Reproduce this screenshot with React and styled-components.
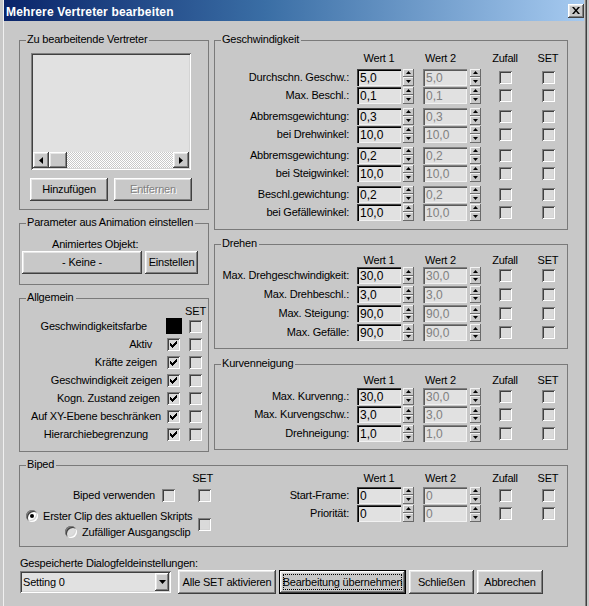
import React from "react";
import styled, { createGlobalStyle, css } from "styled-components";

const BG = "#c8c8c8";
const FIELD = "#e1e1e1";

const GlobalStyle = createGlobalStyle`
  * { box-sizing: border-box; }
  html, body { margin: 0; padding: 0; background: ${BG}; }
  body {
    font-family: "Liberation Sans", Arial, sans-serif;
    font-size: 11px;
    line-height: 13px;
    letter-spacing: -0.2px;
    color: #000;
    overflow: hidden;
  }
`;

const raised = css`
  background: ${BG};
  box-shadow: inset -1px -1px #404040, inset 1px 1px #ffffff,
    inset -2px -2px #808080, inset 2px 2px #e6e6e6;
`;

const raisedThin = css`
  background: ${BG};
  box-shadow: inset -1px -1px #6a6a6a, inset 1px 1px #f4f4f4;
`;

const sunken = css`
  box-shadow: inset 1px 1px #808080, inset -1px -1px #ffffff,
    inset 2px 2px #404040, inset -2px -2px #d4d4d4;
`;

/* ---------- window chrome ---------- */

const Window = styled.div`
  margin-left: 3px;
  width: 584px;
  height: 606px;
  padding: 0 3px 0 1px;
  background: ${BG};
  box-shadow: inset 1px 0 #f0f0f0, inset -1px 0 #404040, inset -2px 0 #808080;
`;

const TitleBar = styled.div`
  height: 21px;
  display: flex;
  align-items: center;
  justify-content: space-between;
  padding-left: 2px;
  background: linear-gradient(90deg, #0a246a 0%, #3a6ea5 45%, #a6caf0 100%);
`;

const Title = styled.span`
  color: #fff;
  font-weight: bold;
  font-size: 12px;
  line-height: 14px;
  letter-spacing: 0.15px;
  padding-top: 2px;
`;

const CloseBtn = styled.div`
  ${raised};
  width: 16px;
  height: 14px;
  display: flex;
  align-items: center;
  justify-content: center;
`;

const Content = styled.div`
  padding: 19px 0 0 15px;
`;

const TopRow = styled.div`
  display: flex;
  align-items: flex-start;
  gap: 5px;
`;

const Column = styled.div`
  width: ${(p) => p.$w}px;
  display: flex;
  flex-direction: column;
  gap: ${(p) => p.$gap || 0}px;
`;

/* ---------- group box ---------- */

const Group = styled.div`
  position: relative;
  width: ${(p) => (p.$w ? `${p.$w}px` : "auto")};
  height: ${(p) => p.$h}px;
  margin-top: ${(p) => p.$mt || 0}px;
  padding: ${(p) => p.$pad || "0"};
  border: 1px solid #7a7a7a;
  display: ${(p) => (p.$row ? "flex" : "block")};
`;

const Legend = styled.span`
  position: absolute;
  top: -8px;
  left: 6px;
  padding: 0 2px 0 1px;
  background: ${BG};
  line-height: 13px;
  white-space: nowrap;
`;

/* ---------- controls ---------- */

const Button = styled.div`
  ${raised};
  position: relative;
  width: ${(p) => p.$w}px;
  height: ${(p) => p.$h || 23}px;
  flex: none;
  display: flex;
  align-items: center;
  justify-content: center;
  white-space: nowrap;
  color: ${(p) => (p.$disabled ? "#808080" : "#000")};
  text-shadow: ${(p) => (p.$disabled ? "1px 1px #ffffff" : "none")};
  ${(p) =>
    p.$default &&
    css`
      border: 1px solid #000;
      &::after {
        content: "";
        position: absolute;
        inset: 3px;
        border: 1px dotted #000;
      }
    `}
`;

const BtnRow = styled.div`
  display: flex;
  align-items: center;
  gap: ${(p) => p.$gap || 0}px;
  margin-top: ${(p) => p.$mt || 0}px;
  height: ${(p) => (p.$h ? `${p.$h}px` : "auto")};
`;

const Caption = styled.div`
  margin-left: ${(p) => p.$ml || 0}px;
  height: 13px;
  white-space: nowrap;
`;

const ListBox = styled.div`
  ${sunken};
  width: 160px;
  height: 117px;
  margin-left: 1px;
  padding: 2px;
  background: ${FIELD};
  display: flex;
  flex-direction: column;
`;

const ListArea = styled.div`
  flex: 1;
`;

const HScroll = styled.div`
  height: 16px;
  display: flex;
`;

const ScrollBtn = styled.div`
  ${raised};
  width: 16px;
  height: 16px;
  display: flex;
  align-items: center;
  justify-content: center;
`;

const Thumb = styled.div`
  ${raised};
  width: 18px;
  height: 16px;
`;

const Track = styled.div`
  flex: 1;
  background-color: #ffffff;
  background-image: conic-gradient(#c8c8c8 25%, transparent 0 50%, #c8c8c8 0 75%, transparent 0);
  background-size: 2px 2px;
`;

const CheckBox = styled.span`
  width: 13px;
  height: 13px;
  flex: none;
  display: inline-flex;
  align-items: center;
  justify-content: center;
  background: #dadada;
  ${sunken};
`;

const Swatch = styled.span`
  width: 16px;
  height: 16px;
  background: #000;
`;

const RadioDot = styled.span`
  width: 12px;
  height: 12px;
  flex: none;
  border-radius: 50%;
  background: ${(p) => (p.$on ? "#ffffff" : "#dcdcdc")};
  box-shadow: inset 1px 1px #808080, inset -1px -1px #ffffff,
    inset 2px 2px #404040, inset -2px -2px #d4d4d4;
  display: inline-flex;
  align-items: center;
  justify-content: center;
  &::after {
    content: "";
    width: 4px;
    height: 4px;
    border-radius: 50%;
    background: #000;
    display: ${(p) => (p.$on ? "block" : "none")};
  }
`;

const SpinField = styled.div`
  width: 44px;
  height: 17px;
  padding: 2px 0 0 3px;
  background: ${FIELD};
  font-size: 12px;
  line-height: 14px;
  letter-spacing: 0;
  color: ${(p) => (p.$disabled ? "#808080" : "#000")};
  box-shadow: inset 1px 1px ${(p) => (p.$disabled ? "#808080" : "#404040")},
    inset 2px 2px ${(p) => (p.$disabled ? "#5a5a5a" : "#000")},
    inset -1px -1px #f2f2f2;
`;

const SpinBox = styled.div`
  width: 11px;
  height: 17px;
  display: flex;
  flex-direction: column;
`;

const SpinHalf = styled.div`
  ${raisedThin};
  flex: 1;
  display: flex;
  align-items: center;
  justify-content: center;
`;

const Combo = styled.div`
  ${sunken};
  width: 151px;
  height: 22px;
  padding: 2px 2px 2px 3px;
  background: ${FIELD};
  display: flex;
  align-items: center;
  justify-content: space-between;
  flex: none;
`;

const ComboBtn = styled.div`
  ${raised};
  width: 14px;
  height: 18px;
  display: flex;
  align-items: center;
  justify-content: center;
`;

/* ---------- icons ---------- */

const Tri = ({ dir, w, h }) => {
  const pts = {
    up: `0,${h} ${w / 2},0 ${w},${h}`,
    down: `0,0 ${w},0 ${w / 2},${h}`,
    left: `${w},0 0,${h / 2} ${w},${h}`,
    right: `0,0 ${w},${h / 2} 0,${h}`,
  }[dir];
  return (
    <svg width={w} height={h} viewBox={`0 0 ${w} ${h}`}>
      <polygon points={pts} fill="#000" />
    </svg>
  );
};

const CheckMark = () => (
  <svg width="7" height="7" viewBox="0 0 7 7" shapeRendering="crispEdges">
    {[2, 3, 4, 3, 2, 1, 0].map((y, i) => (
      <rect key={i} x={i} y={y} width="1" height="3" fill="#000" />
    ))}
  </svg>
);

const CloseX = () => (
  <svg width="8" height="7" viewBox="0 0 8 7">
    <path d="M0 0h2l2 2.4L6 0h2L5 3.5 8 7H6L4 4.6 2 7H0l3-3.5z" fill="#000" />
  </svg>
);

const Check = ({ checked }) => <CheckBox>{checked && <CheckMark />}</CheckBox>;

const Spinner = () => (
  <SpinBox>
    <SpinHalf>
      <Tri dir="up" w={5} h={3} />
    </SpinHalf>
    <SpinHalf>
      <Tri dir="down" w={5} h={3} />
    </SpinHalf>
  </SpinBox>
);

/* ---------- value grid (right side) ---------- */

const COLS = "142px 44px 13px 53px 14px 48px 38px";

const ValGrid = styled.div`
  display: grid;
  grid-template-columns: ${COLS};
  align-items: center;
  justify-items: end;
  height: ${(p) => p.$h}px;
  margin-top: ${(p) => p.$mt || 0}px;
  & > ${CheckBox} {
    justify-self: center;
  }
`;

const HeadGrid = styled.div`
  display: grid;
  grid-template-columns: ${COLS};
  align-items: center;
  height: ${(p) => p.$h}px;
  margin-bottom: ${(p) => p.$mb || 0}px;
`;

const HeadCell = styled.span`
  grid-column: ${(p) => p.$col};
  justify-self: center;
  white-space: nowrap;
`;

const RowLabel = styled.span`
  padding-right: ${(p) => (p.$pr == null ? 8 : p.$pr)}px;
  white-space: nowrap;
`;

const ValHeader = ({ h = 13, mb = 0 }) => (
  <HeadGrid $h={h} $mb={mb}>
    <HeadCell $col={2}>Wert 1</HeadCell>
    <HeadCell $col={4}>Wert 2</HeadCell>
    <HeadCell $col={6}>Zufall</HeadCell>
    <HeadCell $col={7}>SET</HeadCell>
  </HeadGrid>
);

const ValRow = ({ label, v1, v2, h = 18, mt = 0 }) => (
  <ValGrid $h={h} $mt={mt}>
    <RowLabel>{label}</RowLabel>
    <SpinField>{v1}</SpinField>
    <Spinner />
    <SpinField $disabled>{v2}</SpinField>
    <Spinner />
    <Check />
    <Check />
  </ValGrid>
);

/* ---------- Allgemein grid ---------- */

const FlagGrid = styled.div`
  display: grid;
  grid-template-columns: 1fr 22px 13px;
  grid-template-rows: 12px repeat(7, 18px);
  align-items: center;
`;

const FlagLabel = styled.span`
  justify-self: end;
  padding-right: ${(p) => p.$pr}px;
  white-space: nowrap;
`;

const FlagHead = styled.span`
  grid-column: 3;
  justify-self: center;
`;

const FlagCell = styled.div`
  display: flex;
  justify-content: ${(p) => (p.$center ? "center" : "flex-start")};
  margin-left: ${(p) => p.$ml || 0}px;
`;

/* ---------- Biped ---------- */

const BipedLeft = styled.div`
  width: 195px;
  flex: none;
  display: grid;
  grid-template-columns: 142px 36px 17px;
  grid-template-rows: 14px 18px 4px 16px 16px;
  align-items: center;
`;

const BipedRight = styled.div`
  width: 352px;
  flex: none;
`;

const Cell = styled.div`
  grid-column: ${(p) => p.$col};
  grid-row: ${(p) => p.$row};
  justify-self: ${(p) => p.$justify || "start"};
  align-self: ${(p) => p.$align || "center"};
  padding: ${(p) => p.$pad || "0"};
  display: flex;
  align-items: center;
  gap: ${(p) => p.$gap || 0}px;
  white-space: nowrap;
`;

/* ---------- bottom ---------- */

const Bottom = styled.div`
  margin: 10px 0 0 1px;
`;

const BottomRow = styled.div`
  display: flex;
  align-items: center;
  height: 24px;
`;

const ButtonGroup = styled.div`
  display: flex;
  gap: 3px;
  margin-left: 7px;
`;

const allgemein = [
  { label: "Aktiv", pr: 15 },
  { label: "Kräfte zeigen", pr: 10 },
  { label: "Geschwindigkeit zeigen", pr: 5 },
  { label: "Kogn. Zustand zeigen", pr: 7 },
  { label: "Auf XY-Ebene beschränken", pr: 6 },
  { label: "Hierarchiebegrenzung", pr: 19 },
];

export default function App() {
  return (
    <>
      <GlobalStyle />
      <Window>
        <TitleBar>
          <Title>Mehrere Vertreter bearbeiten</Title>
          <CloseBtn>
            <CloseX />
          </CloseBtn>
        </TitleBar>

        <Content>
          <TopRow>
            <Column $w={190} $gap={13}>
              <Group $h={170} $pad="12px 0 0 10px">
                <Legend>Zu bearbeitende Vertreter</Legend>
                <ListBox>
                  <ListArea />
                  <HScroll>
                    <ScrollBtn>
                      <Tri dir="left" w={4} h={7} />
                    </ScrollBtn>
                    <Thumb />
                    <Track />
                    <ScrollBtn>
                      <Tri dir="right" w={4} h={7} />
                    </ScrollBtn>
                  </HScroll>
                </ListBox>
                <BtnRow $gap={6} $mt={8}>
                  <Button $w={78}>Hinzufügen</Button>
                  <Button $w={78} $disabled>
                    Entfernen
                  </Button>
                </BtnRow>
              </Group>

              <Group $h={62} $pad="14px 0 0 2px">
                <Legend>Parameter aus Animation einstellen</Legend>
                <Caption $ml={30}>Animiertes Objekt:</Caption>
                <BtnRow $gap={3}>
                  <Button $w={120}>- Keine -</Button>
                  <Button $w={53}>Einstellen</Button>
                </BtnRow>
              </Group>

              <Group $h={154} $pad="6px 6px 0 0">
                <Legend>Allgemein</Legend>
                <FlagGrid>
                  <FlagHead>SET</FlagHead>
                  <FlagLabel $pr={20}>Geschwindigkeitsfarbe</FlagLabel>
                  <FlagCell $ml={-1}>
                    <Swatch />
                  </FlagCell>
                  <FlagCell>
                    <Check />
                  </FlagCell>
                  {allgemein.map((r) => (
                    <React.Fragment key={r.label}>
                      <FlagLabel $pr={r.pr}>{r.label}</FlagLabel>
                      <FlagCell>
                        <Check checked />
                      </FlagCell>
                      <FlagCell>
                        <Check />
                      </FlagCell>
                    </React.Fragment>
                  ))}
                </FlagGrid>
              </Group>
            </Column>

            <Column $w={354}>
              <Group $h={190} $pad="11px 0 0 0">
                <Legend>Geschwindigkeit</Legend>
                <ValHeader h={13} mb={3} />
                <ValRow label="Durchschn. Geschw.:" v1="5,0" v2="5,0" />
                <ValRow label="Max. Beschl.:" v1="0,1" v2="0,1" />
                <ValRow label="Abbremsgewichtung:" v1="0,3" v2="0,3" mt={3} />
                <ValRow label="bei Drehwinkel:" v1="10,0" v2="10,0" />
                <ValRow label="Abbremsgewichtung:" v1="0,2" v2="0,2" mt={3} />
                <ValRow label="bei Steigwinkel:" v1="10,0" v2="10,0" />
                <ValRow label="Beschl.gewichtung:" v1="0,2" v2="0,2" mt={3} />
                <ValRow label="bei Gefällewinkel:" v1="10,0" v2="10,0" />
              </Group>

              <Group $h={105} $mt={14} $pad="9px 0 0 0">
                <Legend>Drehen</Legend>
                <ValHeader h={12} />
                <ValRow label="Max. Drehgeschwindigkeit:" v1="30,0" v2="30,0" h={19} />
                <ValRow label="Max. Drehbeschl.:" v1="3,0" v2="3,0" h={19} />
                <ValRow label="Max. Steigung:" v1="90,0" v2="90,0" h={19} />
                <ValRow label="Max. Gefälle:" v1="90,0" v2="90,0" h={19} />
              </Group>

              <Group $h={86} $mt={15} $pad="9px 0 0 0">
                <Legend>Kurvenneigung</Legend>
                <ValHeader h={13} />
                <ValRow label="Max. Kurvenng.:" v1="30,0" v2="30,0" h={18} />
                <ValRow label="Max. Kurvengschw.:" v1="3,0" v2="3,0" h={19} />
                <ValRow label="Drehneigung:" v1="1,0" v2="1,0" h={18} />
              </Group>
            </Column>
          </TopRow>

          <Group $w={549} $h={82} $mt={13} $pad="6px 0 0 0" $row>
            <Legend>Biped</Legend>
            <BipedLeft>
              <Cell $col="2 / 4" $row={1} $justify="end" $align="start" $pad="0 2px 0 0">
                SET
              </Cell>
              <Cell $col={1} $row={2} $justify="end" $pad="0 7px 0 0">
                Biped verwenden
              </Cell>
              <Cell $col={2} $row={2}>
                <Check />
              </Cell>
              <Cell $col={3} $row={2}>
                <Check />
              </Cell>
              <Cell $col="1 / 3" $row={4} $pad="0 0 0 6px" $gap={5}>
                <RadioDot $on />
                Erster Clip des aktuellen Skripts
              </Cell>
              <Cell $col="1 / 3" $row={5} $pad="0 0 0 45px" $gap={5}>
                <RadioDot />
                Zufälliger Ausgangsclip
              </Cell>
              <Cell $col={3} $row="4 / 6">
                <Check />
              </Cell>
            </BipedLeft>
            <BipedRight>
              <ValHeader h={13} />
              <ValRow label="Start-Frame:" v1="0" v2="0" mt={1} />
              <ValRow label="Priorität:" v1="0" v2="0" />
            </BipedRight>
          </Group>

          <Bottom>
            <Caption>Gespeicherte Dialogfeldeinstellungen:</Caption>
            <BottomRow>
              <Combo>
                <span>Setting 0</span>
                <ComboBtn>
                  <Tri dir="down" w={7} h={4} />
                </ComboBtn>
              </Combo>
              <ButtonGroup>
                <Button $w={98} $h={24}>
                  Alle SET aktivieren
                </Button>
                <Button $w={127} $h={24} $default>
                  Bearbeitung übernehmen
                </Button>
                <Button $w={65} $h={24}>
                  Schließen
                </Button>
                <Button $w={66} $h={24}>
                  Abbrechen
                </Button>
              </ButtonGroup>
            </BottomRow>
          </Bottom>
        </Content>
      </Window>
    </>
  );
}
